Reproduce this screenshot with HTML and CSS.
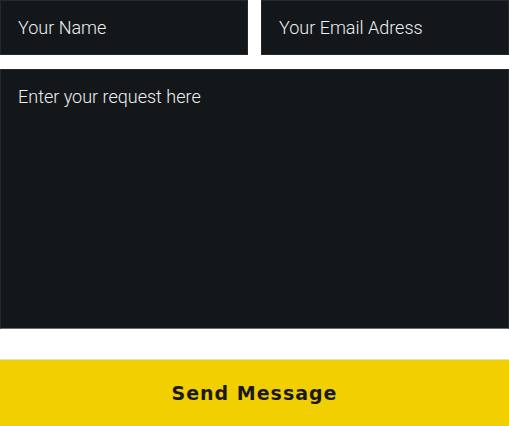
FILE: index.html
```html
<!DOCTYPE html>
<html lang="en">
<head>
  <meta charset="UTF-8" />
  <meta name="viewport" content="width=device-width, initial-scale=1.0"/>
  <title>Contact</title>
  <link rel="stylesheet" href="styles.css">
</head>
<body>

  <form class="contact-form" onsubmit="return false;">
    <div class="form-row">
      <input type="text" name="name" placeholder="Your Name" />
      <input type="email" name="email" placeholder="Your Email Adress" />
    </div>
    <textarea name="message" placeholder="Enter your request here"></textarea>
    <button type="submit">Send Message</button>
  </form>

</body>
</html>
```

FILE: styles.css
```css
:root {
  --field: #13171a;
  --field-border: #25292c;
  --accent: #f2cf00;
  --text: #eef0f1;
}

* {
  box-sizing: border-box;
  margin: 0;
  padding: 0;
}

body {
  font-family: Roboto, 'Noto Sans', sans-serif;
  background-color: #fff;
}

.contact-form {
  display: flex;
  flex-direction: column;
}

.form-row {
  display: grid;
  grid-template-columns: 248px 1fr;
  gap: 13px;
  margin-bottom: 14px;
}

.contact-form input,
.contact-form textarea {
  width: 100%;
  background-color: var(--field);
  border: 1px solid var(--field-border);
  color: var(--text);
  font-family: Roboto, sans-serif;
  font-weight: 300;
  font-size: 18px;
  outline: none;
}

.contact-form input {
  height: 55px;
  padding: 0 17px;
}

.contact-form textarea {
  height: 260px;
  padding: 16px 17px;
  resize: none;
  border-bottom-color: #6b6d6f;
}

.contact-form ::placeholder {
  color: var(--text);
  opacity: 1;
}

.contact-form button {
  margin-top: 30px;
  height: 70px;
  background-color: var(--accent);
  border: none;
  border-top: 1px solid #e6e0c0;
  color: #1a1a1a;
  font-family: 'DejaVu Sans', sans-serif;
  font-weight: 700;
  font-size: 19px;
  letter-spacing: 1px;
  padding-bottom: 4px;
  cursor: pointer;
}
```
